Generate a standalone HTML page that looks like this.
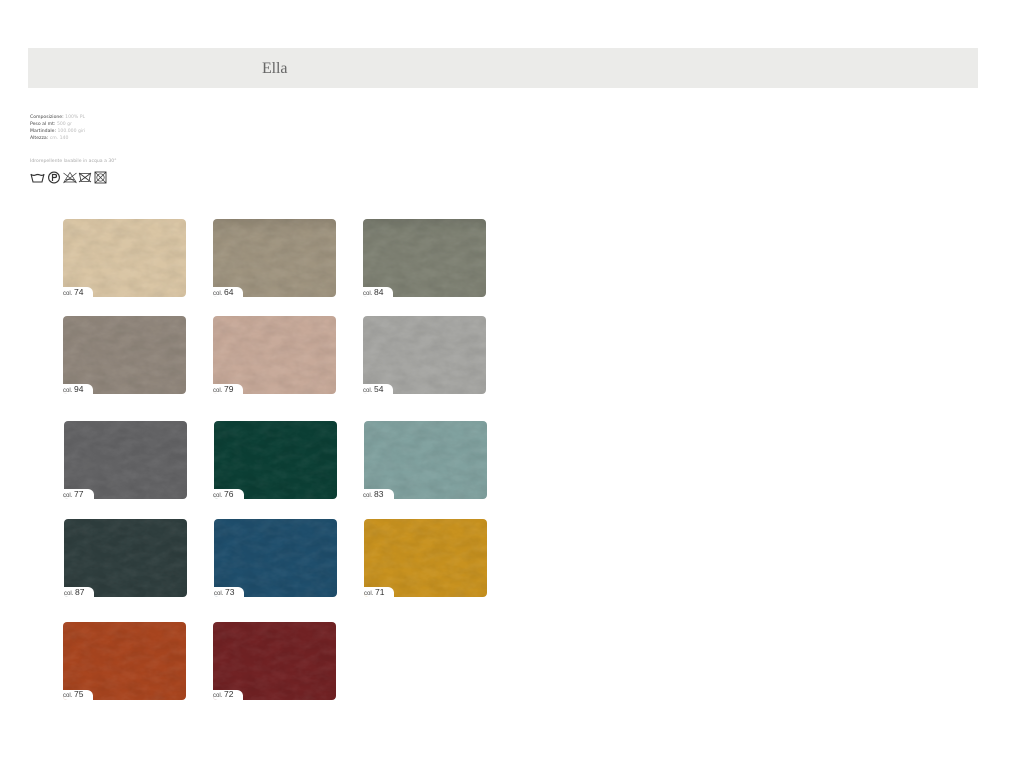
<!DOCTYPE html>
<html lang="it">
<head>
<meta charset="utf-8">
<title>Ella</title>
<style>
html,body{margin:0;padding:0;background:#fff;width:1024px;height:768px;overflow:hidden;font-family:"Liberation Sans",sans-serif}
.bar{position:absolute;left:28px;top:48px;width:950px;height:40px;background:#ebebe9}
.title{position:absolute;left:262px;top:59px;font:16px/20px "Liberation Serif",serif;color:#666;letter-spacing:-.1px}
.info{position:absolute;left:30px;font-family:"DejaVu Sans",sans-serif;font-size:4.6px;line-height:7px;color:#bbb;white-space:nowrap}
.info b{font-weight:400;color:#444}
.s{position:absolute;width:123px;height:78px;border-radius:4px;overflow:hidden}
.s::before,.s::after{content:"";position:absolute;inset:0}
.s::before{background:#000;filter:url(#nd)}
.s::after{background:#000;filter:url(#nl)}
.s i{position:absolute;z-index:2;left:0;bottom:0;width:30px;height:10px;background:#fff;border-top-right-radius:6px}
.t{background-image:linear-gradient(180deg,rgba(0,0,0,.1),rgba(0,0,0,0) 18%)}
.l{position:absolute;z-index:3;font-size:6px;line-height:9px;color:#444;white-space:nowrap}
.l span{font-size:8.5px;color:#333}
</style>
</head>
<body>
<svg width="0" height="0" style="position:absolute">
<filter id="nd" x="0" y="0" width="100%" height="100%" color-interpolation-filters="sRGB">
<feTurbulence type="fractalNoise" baseFrequency=".06 .1" numOctaves="3" seed="3"/>
<feColorMatrix values="0 0 0 0 0  0 0 0 0 0  0 0 0 0 0  .12 0 0 0 -.04"/>
<feComposite in2="SourceAlpha" operator="in"/>
</filter>
<filter id="nl" x="0" y="0" width="100%" height="100%" color-interpolation-filters="sRGB">
<feTurbulence type="fractalNoise" baseFrequency=".07 .12" numOctaves="3" seed="11"/>
<feColorMatrix values="0 0 0 0 1  0 0 0 0 1  0 0 0 0 1  .1 0 0 0 -.035"/>
<feComposite in2="SourceAlpha" operator="in"/>
</filter>
</svg>
<div class="bar"></div>
<div class="title">Ella</div>
<div class="info" style="top:114px"><b>Composizione:</b> 100% PL</div>
<div class="info" style="top:121px"><b>Peso al mt:</b> 500 gr</div>
<div class="info" style="top:128px"><b>Martindale:</b> 100.000 giri</div>
<div class="info" style="top:135px"><b>Altezza:</b> cm. 140</div>
<div class="info" style="top:158px;color:#aaa">Idrorepellente lavabile in acqua a 30°</div>
<svg style="position:absolute;left:30px;top:170px" width="80" height="15" viewBox="0 0 80 15" fill="none" stroke="#333" stroke-width="1">
<path d="M1 4 L3 12 H12 L14 4" stroke-width="1.1"/><path d="M1 4.5 Q3.5 6 5.5 5 T10 5 T14 4.5" stroke-width="1.2"/>
<circle cx="24" cy="7.5" r="5.4" stroke-width="1.1"/><path d="M22.5 11 V4.5 H25 Q26.5 4.5 26.5 6 Q26.5 7.5 25 7.5 H22.5" stroke-width="1.2"/>
<path d="M34 12 L40 2.5 L46 12 Z" stroke-width=".7"/><path d="M33.5 3 L46.5 13 M46.5 3 L33.5 13" stroke-width=".7"/><path d="M36 9.5 H44" stroke-width=".7"/>
<path d="M49.5 3.5 H60.5 L59 11.5 H51 Z" stroke-width=".8"/><path d="M49 3 L61 12 M61 3 L49 12" stroke-width=".8"/>
<rect x="65" y="2" width="11" height="11" stroke-width=".9"/><circle cx="70.5" cy="7.5" r="3.7" stroke-width=".7"/><path d="M65 2 L76 13 M76 2 L65 13" stroke-width=".7"/>
</svg>

<div class="s" style="left:63px;top:219px;background-color:#d9c5a4"><i></i></div>
<div class="s t" style="left:213px;top:219px;background-color:#9f947f"><i></i></div>
<div class="s t" style="left:363px;top:219px;background-color:#7e8173"><i></i></div>
<div class="s" style="left:63px;top:316px;background-color:#90867b"><i></i></div>
<div class="s" style="left:213px;top:316px;background-color:#c7a999"><i></i></div>
<div class="s" style="left:363px;top:316px;background-color:#a6a6a3"><i></i></div>
<div class="s" style="left:64px;top:421px;background-color:#636365"><i></i></div>
<div class="s" style="left:214px;top:421px;background-color:#0c3f35"><i></i></div>
<div class="s" style="left:364px;top:421px;background-color:#80a19f"><i></i></div>
<div class="s" style="left:64px;top:519px;background-color:#2f3e3e"><i></i></div>
<div class="s" style="left:214px;top:519px;background-color:#1f4e6c"><i></i></div>
<div class="s" style="left:364px;top:519px;background-color:#c8921f"><i></i></div>
<div class="s" style="left:63px;top:622px;background-color:#a8451f"><i></i></div>
<div class="s" style="left:213px;top:622px;background-color:#712224"><i></i></div>

<div class="l" style="left:63px;top:288px">col. <span>74</span></div>
<div class="l" style="left:213px;top:288px">col. <span>64</span></div>
<div class="l" style="left:363px;top:288px">col. <span>84</span></div>
<div class="l" style="left:63px;top:385px">col. <span>94</span></div>
<div class="l" style="left:213px;top:385px">col. <span>79</span></div>
<div class="l" style="left:363px;top:385px">col. <span>54</span></div>
<div class="l" style="left:63px;top:490px">col. <span>77</span></div>
<div class="l" style="left:213px;top:490px">col. <span>76</span></div>
<div class="l" style="left:363px;top:490px">col. <span>83</span></div>
<div class="l" style="left:64px;top:588px">col. <span>87</span></div>
<div class="l" style="left:214px;top:588px">col. <span>73</span></div>
<div class="l" style="left:364px;top:588px">col. <span>71</span></div>
<div class="l" style="left:63px;top:690px">col. <span>75</span></div>
<div class="l" style="left:213px;top:690px">col. <span>72</span></div>
</body>
</html>
